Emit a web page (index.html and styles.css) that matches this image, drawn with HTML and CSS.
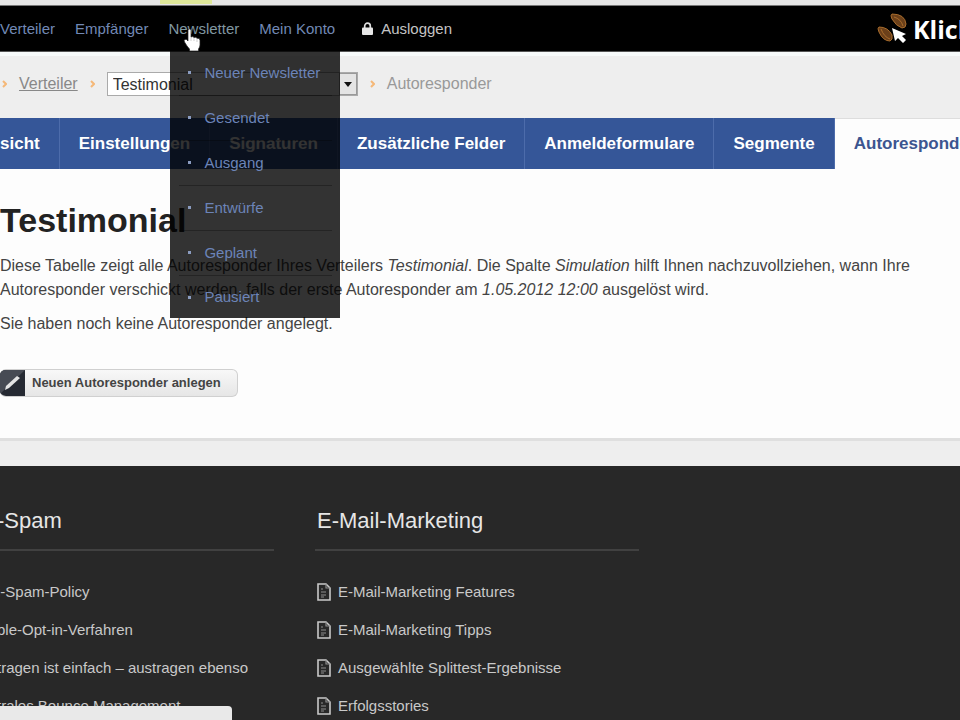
FILE: index.html
```html
<!DOCTYPE html>
<html lang="de">
<head>
<meta charset="utf-8">
<title>Testimonial – Autoresponder</title>
<link rel="stylesheet" href="styles.css">
</head>
<body>
<svg class="defs" aria-hidden="true">
  <symbol id="doc" viewBox="0 0 14 18">
    <path d="M1 1h8l4 4v12H1z" fill="none" stroke="#c9c9c9" stroke-width="1.6"/>
    <path d="M9 1v4h4M4 6h2M4 9h5M4 12h5M4 14h3" fill="none" stroke="#8d8d8d" stroke-width="1.2"/>
  </symbol>
  <symbol id="chev" viewBox="0 0 5 8">
    <path d="M1 1l3 3-3 3" fill="none" stroke="#f5b878" stroke-width="2"/>
  </symbol>
</svg>

<div class="strip"><span class="strip-mark"></span></div>

<header class="topbar">
  <nav class="menu">
    <a href="#">Verteiler</a>
    <a href="#">Empfänger</a>
    <div class="menu-open">
      <a href="#" class="hot">Newsletter</a>
      <ul class="dropdown">
        <li><a href="#">Neuer Newsletter</a></li>
        <li><a href="#">Gesendet</a></li>
        <li><a href="#">Ausgang</a></li>
        <li><a href="#">Entwürfe</a></li>
        <li><a href="#">Geplant</a></li>
        <li><a href="#">Pausiert</a></li>
      </ul>
      <svg class="cursor" viewBox="0 0 18 24" aria-hidden="true">
        <path d="M5 2.500Q5 1 6.500 1T8 2.500V9q2-1 3 .5 2-.8 3 .8 3-.6 3 2.200V17q0 2-1.500 4v2h-9v-2Q4 18.500 1.500 14q-1-2 .5-2.600T5 13z" fill="#fff" stroke="#222" stroke-width=".7"/>
        <path d="M8 9v4M11 10v3M14 11v3" stroke="#bbb" stroke-width=".7"/>
      </svg>
    </div>
    <a href="#">Mein Konto</a>
    <a href="#" class="logout">
      <svg viewBox="0 0 11 13" aria-hidden="true"><path d="M2.700 6V4a2.800 2.800 0 0 1 5.600 0v2" fill="none" stroke="#ddd" stroke-width="1.700"/><rect x="0" y="5.500" width="11" height="7.500" rx="1" fill="#e6e6e6"/></svg>
      Ausloggen
    </a>
  </nav>
  <a href="#" class="brand">
    <svg viewBox="0 0 32 32" aria-hidden="true">
      <g fill="#6b401a" stroke="#a86c2c" stroke-width="1">
        <path d="M15 1Q28 1 29 11Q29 15 25 15Q19 13 15 6Q13 2 15 1z"/>
        <path d="M2 14Q0 15 2 19Q6 28 13 28Q16 27 15 22Q11 14 2 14z"/>
        <path d="M17 4q7 2 9 9M4 16q3 8 9 10" fill="none"/>
      </g>
      <path d="M15 15l3 13 3-3 5 5 3-3-4-4 4-2z" fill="#fff"/>
    </svg>
    <span>Klick</span>
  </a>
</header>

<nav class="crumbs">
  <svg class="chev"><use href="#chev"/></svg>
  <a href="#">Verteiler</a>
  <svg class="chev"><use href="#chev"/></svg>
  <div class="picker">
    <select aria-label="Verteiler"><option>Testimonial</option></select>
    <span class="picker-arrow"></span>
  </div>
  <svg class="chev"><use href="#chev"/></svg>
  <span>Autoresponder</span>
</nav>

<nav class="tabs">
  <a href="#" class="first">sicht</a>
  <a href="#">Einstellungen</a>
  <a href="#">Signaturen</a>
  <a href="#">Zusätzliche Felder</a>
  <a href="#">Anmeldeformulare</a>
  <a href="#">Segmente</a>
  <a href="#" class="active">Autoresponder</a>
</nav>

<main class="content">
  <h1>Testimonial</h1>
  <p>Diese Tabelle zeigt alle Autoresponder Ihres Verteilers <em>Testimonial</em>. Die Spalte <em>Simulation</em> hilft Ihnen nachzuvollziehen, wann Ihre Autoresponder verschickt werden, falls der erste Autoresponder am <em>1.05.2012 12:00</em> ausgelöst wird.</p>
  <p>Sie haben noch keine Autoresponder angelegt.</p>
  <button type="button" class="create">
    <svg viewBox="0 0 25 26" aria-hidden="true"><rect width="25" height="26" fill="#262a33"/><path d="M0 0h25L0 24z" fill="#474b54"/><path d="M5 20l1-4L17 6l3 2L9 18z" fill="#e4e4e4"/></svg>
    <span>Neuen Autoresponder anlegen</span>
  </button>
</main>

<footer class="footer">
  <section class="left">
    <h2>-Spam</h2>
    <ul>
      <li><a href="#">i-Spam-Policy</a></li>
      <li><a href="#">ble-Opt-in-Verfahren</a></li>
      <li><a href="#">tragen ist einfach – austragen ebenso</a></li>
      <li><a href="#">trales Bounce Management</a></li>
    </ul>
  </section>
  <section class="right">
    <h2>E-Mail-Marketing</h2>
    <ul>
      <li><svg><use href="#doc"/></svg><a href="#">E-Mail-Marketing Features</a></li>
      <li><svg><use href="#doc"/></svg><a href="#">E-Mail-Marketing Tipps</a></li>
      <li><svg><use href="#doc"/></svg><a href="#">Ausgewählte Splittest-Ergebnisse</a></li>
      <li><svg><use href="#doc"/></svg><a href="#">Erfolgsstories</a></li>
    </ul>
  </section>
</footer>
<div class="status"></div>
</body>
</html>
```
FILE: styles.css
```css
* { box-sizing: border-box; }
html { height: 100%; }
body {
  margin: 0;
  height: 100%;
  display: flex;
  flex-direction: column;
  overflow: hidden;
  background: #eeeeee;
  color: #444;
  font: 16px/24px "Liberation Sans", Arial, sans-serif;
}
a { color: inherit; text-decoration: none; }
ul { list-style: none; margin: 0; padding: 0; }
.defs { position: absolute; width: 0; height: 0; }

.strip {
  flex: none;
  height: 6px;
  padding-left: 160px;
  background: #e6e6e6;
  border-bottom: 1px solid #777;
}
.strip-mark { display: block; width: 52px; height: 4px; background: #dfe89a; }

.topbar {
  flex: none;
  height: 46px;
  display: flex;
  justify-content: space-between;
  align-items: center;
  background: #000;
  border-bottom: 1px solid #555;
  white-space: nowrap;
}
.menu {
  display: flex;
  align-self: stretch;
  gap: 20px;
  line-height: 46px;
  font-size: 15px;
  color: #7289b5;
}
.menu-open { position: relative; }
.hot { color: #8097a0; }
.logout { display: flex; align-items: center; gap: 8px; margin-left: 7px; color: #c4c4c4; }
.logout svg { width: 11px; height: 13px; }
.dropdown {
  position: absolute;
  z-index: 2;
  top: 45px;
  left: 2px;
  width: 170px;
  background: rgba(0, 0, 0, 0.8);
  line-height: 20px;
  color: #6c84b8;
}
.dropdown li {
  display: flex;
  align-items: center;
  height: 45px;
  padding: 0 6px 2px 18px;
  background: linear-gradient(rgba(0, 0, 0, 0.3), rgba(0, 0, 0, 0.3)) bottom / 90% 1px no-repeat;
}
.dropdown li:last-child { height: 42px; padding-bottom: 0; background: none; }
.dropdown li::before { content: ""; width: 3px; height: 3px; margin-right: 13px; background: #8b9cc0; }
.cursor { position: absolute; z-index: 3; left: 15px; top: 22px; width: 18px; height: 24px; }

.brand {
  display: flex;
  align-items: center;
  gap: 4px;
  width: 83px;
  overflow: hidden;
  color: #fff;
  font: bold 25px/40px "Open Sans", sans-serif;
}
.brand svg { flex: none; width: 32px; height: 32px; }

.crumbs {
  flex: none;
  height: 66px;
  display: flex;
  align-items: center;
  gap: 12px;
  padding: 0 0 6px 2px;
  color: #999;
  border-top: 4px solid #f7fafa;
}
.crumbs a { color: #888; text-decoration: underline; }
.chev { flex: none; width: 5px; height: 8px; }
.picker { position: relative; width: 251px; height: 24px; }
.picker select {
  appearance: none;
  width: 100%;
  height: 100%;
  padding: 0 5px;
  border: 1px solid #aaa;
  border-radius: 0;
  background: #fff;
  color: #333;
  font: inherit;
}
.picker-arrow {
  position: absolute;
  right: 1px;
  top: 1px;
  width: 18px;
  height: 22px;
  border: 1px solid #999;
  background: #e4e4e4;
  pointer-events: none;
}
.picker-arrow::after {
  content: "";
  position: absolute;
  left: 4px;
  top: 8px;
  border: 4px solid transparent;
  border-top: 5px solid #111;
  border-bottom: 0;
}

.tabs {
  flex: none;
  height: 51px;
  display: flex;
  overflow: hidden;
  background: #fdfdfd;
  color: #fff;
  font-size: 17px;
  font-weight: bold;
  line-height: 51px;
  white-space: nowrap;
}
.tabs a { flex: none; padding: 0 19px; background: #355698; border-right: 1px solid #4d6cab; }
.tabs .first { padding-left: 0; }
.tabs .active { flex: 1; padding-right: 0; border: 0; background: #fdfdfd; box-shadow: inset 0 1px #ddd; color: #3c5590; }

.content {
  flex: none;
  min-height: 272px;
  padding: 33px 16px 40px 0;
  background: #fdfdfd;
  border-bottom: 3px solid #dfdfdf;
}
.content h1 { margin: 0 0 16px; font-size: 34px; line-height: 36px; color: #222; }
.content p { margin: 0 0 10px; }
.create {
  display: flex;
  align-items: center;
  gap: 7px;
  height: 28px;
  margin-top: 33px;
  padding: 0 16px 0 0;
  overflow: hidden;
  border: 1px solid #d0d0d0;
  border-left: 0;
  border-radius: 6px;
  background: linear-gradient(#f8f8f8, #e6e6e6);
  color: #444;
  font: bold 13px/24px "Liberation Sans", Arial, sans-serif;
}
.create svg { width: 25px; height: 26px; }

.footer {
  flex: 1 0 auto;
  display: flex;
  gap: 41px;
  margin-top: 25px;
  padding-top: 39px;
  background: #282828;
  color: #c9c9c9;
  font-size: 15px;
}
.left { width: 277px; margin-left: -3px; }
.right { width: 324px; }
.footer h2 {
  margin: 0 0 22px;
  padding: 0 2px 12px 0;
  border-bottom: 2px solid #414141;
  color: #e6e6e6;
  font-size: 22px;
  font-weight: normal;
  line-height: 32px;
}
.right h2, .right li { padding-left: 2px; }
.footer li { display: flex; align-items: center; gap: 7px; height: 38px; white-space: nowrap; }
.footer li svg { width: 14px; height: 18px; }

.status {
  position: fixed;
  left: 0;
  bottom: 0;
  width: 232px;
  height: 14px;
  border-top-right-radius: 4px;
  background: #e9e9e9;
}
```
